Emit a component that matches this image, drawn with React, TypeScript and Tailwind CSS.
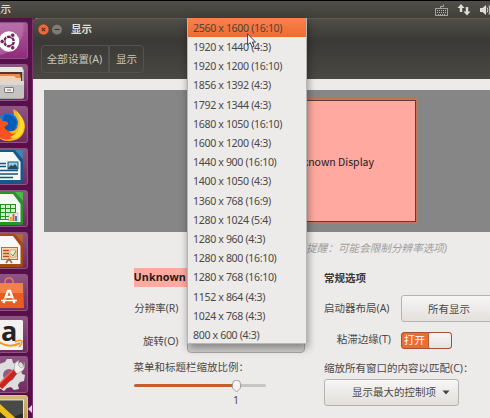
import type { ReactNode } from "react";

const resolutions = [
  "2560 x 1600 (16:10)",
  "1920 x 1440 (4:3)",
  "1920 x 1200 (16:10)",
  "1856 x 1392 (4:3)",
  "1792 x 1344 (4:3)",
  "1680 x 1050 (16:10)",
  "1600 x 1200 (4:3)",
  "1440 x 900 (16:10)",
  "1400 x 1050 (4:3)",
  "1360 x 768 (16:9)",
  "1280 x 1024 (5:4)",
  "1280 x 960 (4:3)",
  "1280 x 800 (16:10)",
  "1280 x 768 (16:10)",
  "1152 x 864 (4:3)",
  "1024 x 768 (4:3)",
  "800 x 600 (4:3)",
];

function Tile({ children, className = "" }: { children: ReactNode; className?: string }) {
  return (
    <div className={`h-[37px] w-7 shrink-0 overflow-hidden rounded-r-[3px] border-y border-r border-[#8d5580] bg-linear-to-b from-[#8f5582] to-[#6f2a5f] ${className}`}>
      <svg width="28" height="37" viewBox="0 1 28 37" className="block">{children}</svg>
    </div>
  );
}

function Sheet({ dark, light, children }: { dark: string; light: string; children: ReactNode }) {
  return (
    <>
      <path d="M-2 2H15L23 12V33Q23 35 21 35H-2Z" fill={dark} />
      <path d="M-2 4H13L20.500 14V32H-2Z" fill="#f8f8f6" />
      <path d="M15 2H23V11Z" fill={light} />
      {children}
    </>
  );
}

function Launcher() {
  return (
    <div className="relative flex w-[33px] shrink-0 flex-col gap-[5px] overflow-hidden border-r border-[#783369] bg-[#58104b] pt-1">
      <Tile className="from-[#ad5b9b] to-[#8f2b7b]">
        <path d="M0 1H23C26 15 17 29 0 33Z" fill="#c486b8" opacity=".45" />
        <circle cx="9" cy="19.500" r="10.200" fill="#fff" />
        <circle cx="9" cy="19.500" r="4.700" fill="none" stroke="#79245f" strokeWidth="2.500" />
        <path d="M9 19.500L16 19.500M9 19.500L5 12.500M9 19.500L5 26.500" stroke="#fff" strokeWidth="1" />
        <circle cx="2.200" cy="19.500" r="2.200" fill="#79245f" stroke="#fff" strokeWidth=".8" />
        <circle cx="12.700" cy="13.200" r="2.200" fill="#79245f" stroke="#fff" strokeWidth=".8" />
        <circle cx="12.700" cy="25.800" r="2.200" fill="#79245f" stroke="#fff" strokeWidth=".8" />
      </Tile>
      <Tile>
        <path d="M-1 3H22L24 6V33Q24 35 22 35H-1Z" fill="#aaa8a5" />
        <path d="M-1 3H22L23.500 8H-1Z" fill="#e8e7e4" />
        <path d="M-1 8H22V17H-1Z" fill="#55352b" />
        <path d="M-1 10H20L21 15H-1Z" fill="#ed8a45" />
        <path d="M-1 12H14L16 14H21V17H-1Z" fill="#f6ceb0" />
        <path d="M-1 17H24V33Q24 34 22 34H-1Z" fill="#c5c4c1" />
        <path d="M-1 17H24V21H-1Z" fill="#d9d8d6" />
        <rect x="4.500" y="23.500" width="9" height="5" rx=".7" fill="#efefed" stroke="#777" />
        <path d="M7 26H11" stroke="#777" />
      </Tile>
      <Tile>
        <circle cx="9" cy="20" r="13" fill="#1479dd" />
        <path d="M5 8Q13 8 17 16L14 27L5 28L0 22Z" fill="#075bb8" />
        <path d="M13 3Q25 12 25 20Q24 35 8 35Q-3 35-5 24L-2 11Q1 12 2 15L7 16L8 18L4 21Q5 25 9 25Q14 26 17 22Q20 14 14 9Z" fill="#ffb719" />
        <path d="M-2 11Q1 12 2 15L7 16L8 18L4 21Q5 25 9 25Q11 29 17 27Q11 36 3 33L-4 30Z" fill="#fb5021" />
        <path d="M14 3Q20 9 20 17Q20 27 10 31Q18 35 23 25Q27 13 14 3Z" fill="#ffdc2d" />
      </Tile>
      <Tile>
        <Sheet dark="#14598b" light="#3d86b5">
          <path d="M0 15.500H6M0 18.500H6M0 22.500H18M0 26H18M0 29.500H13" stroke="#155580" strokeWidth="1.500" />
          <rect x="8" y="14" width="10" height="7" fill="#98ceea" stroke="#155580" />
          <path d="M8 20L11 17L13 18L15 16L18 20V21H8Z" fill="#264c5a" />
        </Sheet>
      </Tile>
      <Tile>
        <Sheet dark="#23952a" light="#49b94a">
          <rect x="0" y="14" width="16" height="16" fill="#d8efcf" />
          <path d="M.500 14V30M5.500 14V30M10.500 14V30M15.500 14V30M0 14.500H16M0 18.500H16M0 22.500H16M0 26.500H16M0 29.500H16" stroke="#209027" />
          <rect x="9" y="23" width="9" height="8" fill="#eee" stroke="#999" strokeWidth=".5" />
          <path d="M11 27V31" stroke="#f3ad25" strokeWidth="2" />
          <path d="M13.500 24V31" stroke="#d36731" strokeWidth="2" />
          <path d="M16 26V31" stroke="#407ab2" strokeWidth="2" />
        </Sheet>
      </Tile>
      <Tile>
        <Sheet dark="#a54a16" light="#b46836">
          <rect x="1.500" y="15.500" width="16" height="12" fill="#f7d9b5" stroke="#bd6d37" />
          <path d="M3 18.500H9M3 21.500H9M3 24.500H9" stroke="#b84d1a" strokeWidth="1.500" />
          <rect x="10" y="18" width="6" height="7" fill="#e8edcc" stroke="#bf8051" strokeWidth=".6" />
          <path d="M11 22L13 24L16 19" fill="none" stroke="#6c8b49" />
          <path d="M6 31L9 27L12 31" fill="none" stroke="#a65c34" strokeWidth="1.500" />
        </Sheet>
      </Tile>
      <Tile>
        <path d="M5 13V8Q5 4 9 4Q13 4 13 8V13" fill="none" stroke="#e77c54" strokeWidth="1.500" />
        <path d="M-1 9H23L24 34H-1Z" fill="#e95c23" />
        <path d="M-1 9H23V19H-1Z" fill="#f28149" />
        <path d="M3.500 29L8 17H10L14.500 29M6.500 23H12" fill="none" stroke="#fff" strokeWidth="2.300" />
        <path d="M1 26.500H17" stroke="#fff" strokeWidth="1.500" />
        <path d="M4 25H14" stroke="#e95c23" />
      </Tile>
      <Tile>
        <rect x="-3" y="4" width="26" height="30" rx="1.500" fill="#f4f2f1" />
        <text x="1" y="25" fontFamily="Open Sans, sans-serif" fontWeight="700" fontSize="27" fill="#252423">a</text>
        <path d="M-1 26Q9 33 20 27" fill="none" stroke="#f7981d" strokeWidth="2" />
        <path d="M15 26Q20 23 22 25Q22 29 19 31" fill="none" stroke="#f7981d" strokeWidth="1.500" />
      </Tile>
      <Tile className="-mt-[2px]">
        <path d="M5 6L7 3H12L13 7L17 8L21 6L24 10L21 14L22 18L25 19L24 25L20 26L18 29L19 33L14 34L11 31L7 32L4 35L-1 32V8Z" fill="#dedddd" />
        <circle cx="9" cy="19" r="6" fill="#925d84" />
        <path d="M0 31L17 14" stroke="#c9251e" strokeWidth="6" />
        <path d="M-1 28L13 14" stroke="#f36050" strokeWidth="1.500" />
        <path d="M14 14L15 7L19 4L18 9L21 12L24 10L24 6Q26 14 20 16L17 18Z" fill="#f1f0ef" stroke="#999" strokeWidth=".6" />
      </Tile>
      <Tile className="-mt-[3px] border-[#dec184] from-[#d2b777] to-[#b38b41]">
        <rect x="-2" y="5" width="25.500" height="29" fill="#282a29" stroke="#ece6cf" strokeWidth="1" />
        <path d="M0 6H23V18L0 28Z" fill="#676967" opacity=".5" />
        <path d="M-1 8L23 30H-1Z" fill="#edbd18" />
        <path d="M0 17L10 26H0Z" fill="#353321" />
        <path d="M2 27V30M6 27V30M10 27V30M14 27V30" stroke="#ac7c12" strokeWidth=".7" />
      </Tile>
      <svg className="absolute top-[387px] right-0" width="4" height="8"><path d="M4 0V8L0 4Z" fill="#dbd7dc" /></svg>
    </div>
  );
}

function StatusIcons() {
  return (
    <svg width="56" height="17" viewBox="434 1 56 17" className="shrink-0">
      <rect x="435.500" y="8.500" width="12" height="7" fill="#454440" stroke="#a3a199" />
      <path d="M437 10.500H446M437 12.500H446M438 14.500H446" stroke="#b8b5ad" strokeDasharray="1 1" />
      <path d="M440.500 8V6.500H443.500V4.500" fill="none" stroke="#aaa79f" />
      <path d="M461 12V7M467 7V12" stroke="#e1ded7" strokeWidth="2.400" />
      <path d="M457.500 8L461 4L464.500 8ZM463.500 11.500L467 15.500L470.500 11.500Z" fill="#e1ded7" />
      <path d="M480 8H482.500L486 5V15L482.500 12H480Z" fill="#dfdcd3" />
      <path d="M487 7.500Q489 10 487 12.500M489 5.500Q491 10 489 14.500" fill="none" stroke="#dfdcd3" />
    </svg>
  );
}

function WindowHeader() {
  return (
    <header className="h-[61px] rounded-tl-[5px] border-t border-[#5d5b52] bg-linear-to-b from-[#4c4b44] to-[#3b3a36] text-[#deddd5]">
      <div className="flex h-[21px] items-center bg-linear-to-b from-[#504e47] to-[#3b3a35] pl-[5px] text-[10.500px] font-bold">
        <svg width="26" height="12" viewBox="0 0 26 12">
          <circle cx="5.500" cy="5.500" r="5.400" fill="#f0683a" stroke="#36342f" strokeWidth=".4" />
          <path d="M3.800 3.800L7.200 7.200M7.200 3.800L3.800 7.200" stroke="#592f20" strokeWidth="1.200" />
          <circle cx="19" cy="5.500" r="5.300" fill="#7d7b74" stroke="#36342f" strokeWidth=".4" />
          <path d="M16.500 5.500H21.500" stroke="#35342f" strokeWidth="1.200" />
        </svg>
        <span className="ml-[7px]">显示</span>
      </div>
      <div className="flex h-[39px] bg-linear-to-b from-[#3a3935] to-[#494843] pt-[5px] pl-2 text-[10.600px] text-[#cbc8bd]">
        <div className="flex h-7 w-[68px] items-center justify-center rounded-l border border-[#55534c] pt-px pr-px"><span className="whitespace-nowrap">全部设置(A)</span></div>
        <div className="flex h-7 w-[35px] items-center justify-center rounded-r border border-[#55534c] pt-px">显示</div>
      </div>
    </header>
  );
}

function Settings() {
  return (
    <div className="flex pl-[100.500px] whitespace-nowrap">
      <section className="w-[190.500px] shrink-0">
        <div className="mt-[7px] flex h-[19px] w-[110px] items-center bg-[#ffa9a0] text-[10.800px] font-bold tracking-[0.1px] text-[#251b1b]">Unknown Display</div>
        <div className="mt-[11px] h-5 w-[45px] text-right leading-5">分辨率(R)</div>
        <div className="mt-[13px] flex h-5 leading-5">
          <div className="w-[45px] text-right">旋转(O)</div>
          <div className="-mt-[6px] ml-[8.500px] flex h-7 w-[118px] items-center rounded border border-[#aaa8a5] bg-linear-to-b from-[#eee] to-[#d1cfcd] pl-[6px]">正常</div>
        </div>
        <div className="mt-[6px] leading-5">菜单和标题栏缩放比例：</div>
        <div className="relative mt-[5px] h-[14px] w-[132px]">
          <div className="h-[3px] translate-y-[2px] rounded bg-linear-to-r from-[#c55e2b] from-78% to-[#c7c4c1] to-78%" />
          <svg className="absolute -top-[2px] left-[98px]" width="9" height="13"><path d="M1.500 1Q4.500-.5 7.500 1L8.500 4V8L4.500 12L.5 8V4Z" fill="#f4f3f2" stroke="#96938f" strokeWidth=".8" /></svg>
        </div>
        <div className="-mt-1 w-[205px] text-center leading-4">1</div>
      </section>
      <section className="w-[200px] shrink-0">
        <div className="mt-[8px] h-[19px] leading-[19px] font-bold text-[#393836]">常规选项</div>
        <div className="mt-[7px] flex items-center">
          <span className="w-[77px]">启动器布局(A)</span>
          <div className="h-[27px] w-[115px] rounded-[3px] border border-[#b7b3af] bg-linear-to-b from-[#f7f6f5] to-[#e3e0dd] pl-[26px] leading-[26px]">所有显示</div>
        </div>
        <div className="mt-[9px] flex h-[18px] items-center">
          <span className="mr-[10px] w-[67px] text-right">粘滞边缘(T)</span>
          <div className="flex h-[17px] w-[51px] overflow-hidden rounded-[3px] border border-[#a65034] bg-[#ed6c32] text-white">
            <span className="w-[26px] pl-[2px] leading-[15px]">打开</span>
            <span className="h-full flex-1 rounded-[2px] border-l border-[#b35b3c] bg-linear-to-b from-[#f7f6f5] to-[#e6e2df]" />
          </div>
        </div>
        <div className="mt-[9px] leading-5">缩放所有窗口的内容以匹配(C)：</div>
        <div className="mt-[1px] flex h-[27px] w-[135px] items-center rounded-[3px] border border-[#b7b3af] bg-linear-to-b from-[#f7f6f5] to-[#e2dfdc] pl-[27px]">
          <span>显示最大的控制项</span>
          <svg className="ml-[6px]" width="8" height="5"><path d="M.5.500H7.500L4 4.500Z" fill="#444" /></svg>
        </div>
      </section>
    </div>
  );
}

function ResolutionMenu() {
  return (
    <div className="absolute top-[18px] left-[187px] h-[326px] w-[120px] border-x border-b border-[#b8b6b4] bg-[#edebea] text-[10.600px] tracking-[-0.350px] text-[#4b4947] shadow-[1px_4px_8px_#0006]">
      {resolutions.map((resolution, index) => (
        <div key={resolution} className={`flex h-[19.200px] items-center pt-[2.500px] pl-[5px] whitespace-nowrap ${index === 0 ? "bg-linear-to-b from-[#fa814b] to-[#ed6b31] text-[#514337]" : ""}`}>
          {resolution}
        </div>
      ))}
    </div>
  );
}

export default function App() {
  return (
    <div className="relative flex h-[418px] w-[490px] flex-col overflow-hidden bg-[#edebea] font-['Noto_Sans','Noto_Sans_CJK_SC',sans-serif] text-[10.500px] text-[#4b4947]">
      <div className="flex h-[18px] shrink-0 items-center justify-between border-t border-black bg-linear-to-b from-[#504e47] to-[#403f3a] text-[#deddd5]">
        <span className="-ml-[10px] pt-px text-[10.600px] font-medium">显示</span>
        <StatusIcons />
      </div>
      <div className="flex min-h-0 flex-1 bg-[#58104b]">
        <Launcher />
        <main className="min-w-0 flex-1 overflow-hidden rounded-tl-[5px] bg-[#edebea]">
          <WindowHeader />
          <div className="mt-[11px] ml-[11px] flex h-[142px] justify-end bg-[#868686] pt-2 pr-[72px]">
            <div className="h-[126px] w-[228px] border-2 border-[#bd7657] bg-[#ffa9a0]">
              <div className="flex h-full w-full items-center justify-end border border-[#653b35] pt-[2px] pr-[41px] text-[#251b1b]"><span className="font-['Noto_Sans_CJK_SC',sans-serif]">Unknown Display</span></div>
            </div>
          </div>
          <div className="mt-[9px] flex h-5 justify-end pr-[43px] text-[10.600px] text-[#a09d9a] italic"><span className="whitespace-nowrap">(更改后需要提醒：可能会限制分辨率选项)</span></div>
          <Settings />
        </main>
      </div>
      <ResolutionMenu />
      <svg className="absolute top-[33px] left-[247px]" width="9" height="15" viewBox="0 0 9 15"><path d="M.6.8V12L3.200 9.700L5.200 14L7.100 13.200L5.300 9.100H8.500Z" fill="#f7f7f7" stroke="#28313a" strokeWidth=".9" /></svg>
    </div>
  );
}
